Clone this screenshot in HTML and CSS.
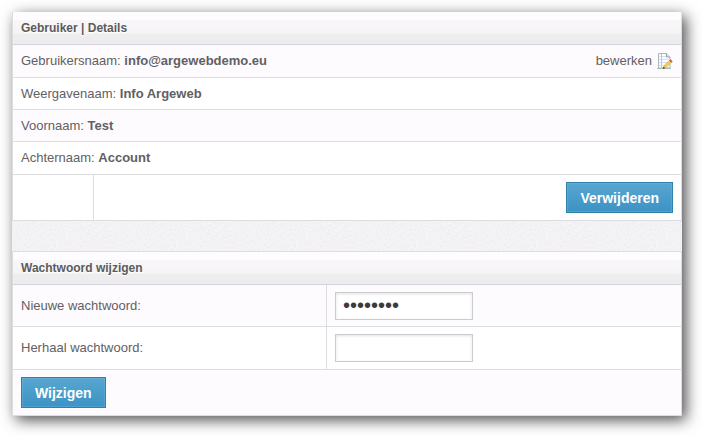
FILE: index.html
```html
<!DOCTYPE html>
<html lang="nl">
<head>
    <meta charset="utf-8">
    <title>Gebruiker | Details</title>
    <meta name="viewport" content="width=device-width, initial-scale=1.0">
    <link rel="stylesheet" href="styles.css">
</head>
<body>
    <div class="panel">
        <!-- User details -->
        <table class="grid">
            <thead>
                <tr><th colspan="2">Gebruiker | Details</th></tr>
            </thead>
            <tbody>
                <tr class="odd tall">
                    <td colspan="2">
                        <div class="line">
                            <span>Gebruikersnaam: <strong>info@argewebdemo.eu</strong></span>
                            <a class="edit" href="#">bewerken
                                <svg width="16" height="16" viewBox="0 0 16 16" aria-hidden="true">
                                    <path d="M0 15.500h14" stroke="#b4bcba" fill="none"/>
                                    <path d="M1.500 .5h8l3.500 3.500v11h-11.500z" fill="#fcfdff" stroke="#a9b8b5"/>
                                    <path d="M9.500 .5v3.500h3.500" fill="#e4ecea" stroke="#8fa39f"/>
                                    <path d="M2 3.500h7M2 6.500h10M2 9.500h8M2 12.500h5" stroke="#d3e0f5" fill="none"/>
                                    <path d="M4.500 1v14" stroke="#f8aeb0" fill="none"/>
                                    <path d="M6.500 15l1-3 5-4.500 1.700 1.700-4.700 4.800z" fill="#f0d648" stroke="#a8963e" stroke-width=".5"/>
                                    <path d="M12.200 7.500l1.300-1.300 2.200 2.200-1.300 1.300z" fill="#ee4644"/>
                                    <path d="M5.800 15.800l.7-2 1.500 1.500z" fill="#222"/>
                                </svg>
                            </a>
                        </div>
                    </td>
                </tr>
                <tr><td colspan="2">Weergavenaam: <strong>Info Argeweb</strong></td></tr>
                <tr class="odd"><td colspan="2">Voornaam: <strong>Test</strong></td></tr>
                <tr class="tall"><td colspan="2">Achternaam: <strong>Account</strong></td></tr>
                <tr class="actions">
                    <td class="narrow"></td>
                    <td class="right"><button type="button">Verwijderen</button></td>
                </tr>
            </tbody>
        </table>

        <!-- Change password -->
        <form class="password" onsubmit="return false">
            <table class="grid">
                <thead>
                    <tr><th colspan="2">Wachtwoord wijzigen</th></tr>
                </thead>
                <tbody>
                    <tr class="odd field">
                        <td class="name"><label for="new-password">Nieuwe wachtwoord:</label></td>
                        <td><input type="password" id="new-password" value="password"></td>
                    </tr>
                    <tr class="field">
                        <td class="name"><label for="repeat-password">Herhaal wachtwoord:</label></td>
                        <td><input type="password" id="repeat-password"></td>
                    </tr>
                    <tr class="odd actions">
                        <td colspan="2"><button type="submit">Wijzigen</button></td>
                    </tr>
                </tbody>
            </table>
        </form>
    </div>
</body>
</html>
```

FILE: styles.css
```css
body {
    margin: 0;
    padding: 12px 20px 20px 12px;
    background-color: #fff;
    color: #626062;
    font-family: "Liberation Sans", Arial, sans-serif;
    font-size: 13px;
    line-height: 16px;
}

.panel {
    box-shadow: 4px 4px 14px rgba(0, 0, 0, 0.7);
}

.grid {
    width: 100%;
    border-collapse: separate;
    border-spacing: 0;
    border: 1px solid #dddddf;
    border-width: 0 1px;
    background-color: #fff;
}

.password {
    margin: 0;
    padding-top: 30px;
    /* fine paper grain, seen between the two tables */
    background: #f5f4f6 url("data:image/svg+xml,%3Csvg xmlns='http://www.w3.org/2000/svg' width='120' height='120'%3E%3Cfilter id='n'%3E%3CfeTurbulence type='fractalNoise' baseFrequency='.5' numOctaves='2' stitchTiles='stitch'/%3E%3CfeColorMatrix values='0 0 0 0 .6 0 0 0 0 .57 0 0 0 0 .6 .4 0 0 0 -.14'/%3E%3C/filter%3E%3Crect width='120' height='120' filter='url(%23n)'/%3E%3C/svg%3E");
}

.password .grid {
    border-top-width: 1px;
}

.grid th {
    padding: 8px;
    border-bottom: 1px solid #d6d2de;
    background: linear-gradient(#fefcff 25%, #f7f7f8 25%, #f6f3f6 68%, #eeeeee 68%, #ecebee);
    color: #5c5a5c;
    font-size: 12px;
    text-align: left;
    text-shadow: 0 1px 0 #fff;
}

.grid td {
    height: 31px;
    padding: 0 8px;
    border-bottom: 1px solid #dddddf;
}

.grid .odd {
    background-color: #fefbff;
}

.grid .tall td {
    height: 32px;
}

.grid .actions td {
    height: 45px;
}

.grid .field td {
    height: 42px;
}

.grid .field.odd td {
    height: 41px;
}

.grid .narrow {
    width: 64px;
    border-right: 1px solid #dddddf;
}

.grid .name {
    width: 47%;
    box-sizing: border-box;
    border-right: 1px solid #dddddf;
}

.grid .right {
    text-align: right;
}

.line {
    display: flex;
    align-items: center;
    justify-content: space-between;
}

.edit {
    display: flex;
    align-items: center;
    gap: 5px;
    color: inherit;
    text-decoration: none;
}

button {
    height: 31px;
    padding: 0 13px;
    border: 1px solid #2f80ab;
    background: linear-gradient(#58a6d0, #3b93c5);
    box-shadow: inset 0 0 2px #7fc0e2;
    color: #fff;
    font: bold 14px "Liberation Sans", Arial, sans-serif;
    vertical-align: middle;
    cursor: pointer;
}

button:hover {
    background: #3b93c5;
}

input {
    display: block;
    box-sizing: border-box;
    width: 138px;
    height: 28px;
    padding: 0 7px;
    border: 1px solid #cccbce;
    background-color: #fff;
    box-shadow: inset 0 1px 3px #e2e2e4;
    color: #3c3a3c;
    font: 20px "Liberation Sans", Arial, sans-serif;
}
```
